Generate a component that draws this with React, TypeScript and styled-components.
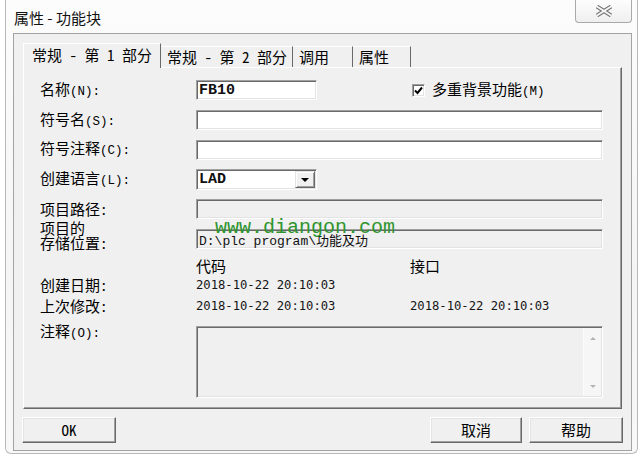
import styled, { createGlobalStyle } from 'styled-components';

const MONO_CJK = `"Noto Sans Mono CJK SC", "Noto Sans CJK SC", "DejaVu Sans Mono", monospace`;
const INPUT_FONT = `"Liberation Mono", "Noto Sans CJK SC", monospace`;

const GlobalStyle = createGlobalStyle`
  html, body {
    margin: 0;
    padding: 0;
    background: #ffffff;
  }
  body {
    width: 640px;
    height: 455px;
    overflow: hidden;
    font-family: ${MONO_CJK};
    color: #000;
  }
`;

const tabs = [
  { label: '常规 - 第 1 部分', width: 138, active: true },
  { label: '常规 - 第 2 部分', width: 132 },
  { label: '调用', width: 60 },
  { label: '属性', width: 58 },
];

const App = () => {
  return (
    <>
      <GlobalStyle />
      <Window>
        <TitleBar>
          <Title>属性 - 功能块</Title>
          <CloseButton aria-label="关闭">
            <svg width="18" height="12" viewBox="0 0 18 12">
              <path d="M2 1.5 L16 10.5 M16 1.5 L2 10.5" stroke="#707070" strokeWidth="4" />
              <path d="M2 1.5 L16 10.5 M16 1.5 L2 10.5" stroke="#f8f8f8" strokeWidth="2" />
            </svg>
          </CloseButton>
        </TitleBar>

        <Client>
          <TabStrip>
            {tabs.map((t) => (
              <Tab key={t.label} $active={t.active} $w={t.width}>
                {t.label}
              </Tab>
            ))}
          </TabStrip>

          <Panel>
            <FormGrid>
              <Label>名称<Key>(N):</Key></Label>
              <Field $w={121}>
                <FieldText $bold>FB10</FieldText>
              </Field>
              <CheckCell>
                <CheckBox>
                  <svg width="9" height="9" viewBox="0 0 9 9">
                    <polyline points="1,4.5 3.5,7 8,1.5" fill="none" stroke="#000" strokeWidth="2" />
                  </svg>
                </CheckBox>
                <span>多重背景功能<Key>(M)</Key></span>
              </CheckCell>

              <Label>符号名<Key>(S):</Key></Label>
              <Field $span />

              <Label>符号注释<Key>(C):</Key></Label>
              <Field $span />

              <Label>创建语言<Key>(L):</Key></Label>
              <Field $w={121} $h={21}>
                <FieldText $bold>LAD</FieldText>
                <DropButton>
                  <DownTriangle />
                </DropButton>
              </Field>

              <Label>项目路径:</Label>
              <Field $span $disabled />

              <StackLabel>
                项目的
                <br />
                存储位置:
              </StackLabel>
              <Field $span $disabled>
                <FieldText>D:\plc program\功能及功</FieldText>
              </Field>
            </FormGrid>

            <InfoGrid>
              <Heading $col={2}>代码</Heading>
              <Heading $col={3}>接口</Heading>

              <Label>创建日期:</Label>
              <DateText $col={2}>2018-10-22 20:10:03</DateText>

              <Label>上次修改:</Label>
              <DateText $col={2}>2018-10-22 20:10:03</DateText>
              <DateText $col={3}>2018-10-22 20:10:03</DateText>

              <TopLabel>注释<Key>(O):</Key></TopLabel>
              <TextBox>
                <Scrollbar>
                  <Arrow $dir="up" />
                  <Arrow $dir="down" />
                </Scrollbar>
              </TextBox>
            </InfoGrid>

            <Watermark>www.diangon.com</Watermark>
          </Panel>

          <Footer>
            <Button $w={94}>OK</Button>
            <ButtonGroup>
              <Button $w={92}>取消</Button>
              <Button $w={94}>帮助</Button>
            </ButtonGroup>
          </Footer>
        </Client>
      </Window>
    </>
  );
};

export default App;

const Window = styled.div`
  margin-left: 5px;
  width: 633px;
  height: 454px;
  box-sizing: border-box;
  border: 1px solid #b9b9b9;
  border-top: none;
  border-radius: 0 0 6px 6px;
  background: linear-gradient(180deg, #fcfcfc 0%, #f5f5f5 60%, #f8f8f8 100%);
  display: flex;
  flex-direction: column;
`;

const TitleBar = styled.div`
  height: 33px;
  display: flex;
  align-items: flex-start;
  padding: 0 5px 0 8px;
`;

const Title = styled.div`
  margin-top: 9px;
  font-family: "Noto Sans CJK SC", sans-serif;
  font-size: 15px;
  line-height: 17px;
  color: #111;
`;

const CloseButton = styled.div`
  margin-left: auto;
  width: 57px;
  height: 23px;
  box-sizing: border-box;
  border: 1px solid #a9a9a9;
  border-top: none;
  border-radius: 0 0 4px 4px;
  background: linear-gradient(180deg, #fdfdfd 0%, #efefef 100%);
  display: flex;
  align-items: center;
  justify-content: center;
`;

const Client = styled.div`
  margin: 0 5px 0 7px;
  height: 418px;
  box-sizing: border-box;
  border: 1px solid #a3a3a3;
  background: #f0f0f0;
  padding: 9px 9px 0 9px;
  display: flex;
  flex-direction: column;
`;

const TabStrip = styled.div`
  position: relative;
  z-index: 1;
  height: 25px;
  margin-bottom: -1px;
  display: flex;
  align-items: flex-end;
`;

const Tab = styled.div<{ $active?: boolean; $w: number }>`
  box-sizing: border-box;
  width: ${({ $w }) => $w}px;
  height: ${({ $active }) => ($active ? 25 : 21)}px;
  margin-bottom: ${({ $active }) => ($active ? 0 : 1)}px;
  padding-left: ${({ $active }) => ($active ? 8 : 5)}px;
  border-top: 1px solid #ffffff;
  border-left: 1px solid ${({ $active }) => ($active ? '#ffffff' : 'transparent')};
  border-right: 1px solid #696969;
  background: #f0f0f0;
  font-size: 15px;
  line-height: ${({ $active }) => ($active ? 22 : 19)}px;
  white-space: pre;
`;

const Panel = styled.div`
  position: relative;
  height: 342px;
  box-sizing: border-box;
  border-top: 1px solid #ffffff;
  border-left: 1px solid #ffffff;
  border-right: 1px solid #696969;
  border-bottom: 1px solid #696969;
  box-shadow: inset -1px -1px 0 #a0a0a0;
  padding: 12px 18px 0 16px;
`;

const FormGrid = styled.div`
  display: grid;
  grid-template-columns: 156px 214px 1fr;
  grid-template-rows: 20px 20px 19px 20px 20px 20px;
  row-gap: 10px;
  align-items: center;
`;

const InfoGrid = styled.div`
  display: grid;
  grid-template-columns: 156px 214px 1fr;
  grid-template-rows: 18px 20px 22px auto;
  margin-top: 8px;
  align-items: center;
`;

const Label = styled.div`
  grid-column: 1;
  font-size: 15px;
  line-height: 20px;
  white-space: nowrap;
`;

const StackLabel = styled(Label)`
  align-self: end;
  line-height: 15px;
  margin-bottom: -1px;
`;

const TopLabel = styled(Label)`
  align-self: start;
  padding-top: 5px;
  line-height: 18px;
`;

const Key = styled.span`
  font-family: "Liberation Mono", monospace;
  font-size: 12.5px;
`;

const Field = styled.div<{ $w?: number; $h?: number; $span?: boolean; $disabled?: boolean }>`
  grid-column: ${({ $span }) => ($span ? '2 / 4' : '2')};
  align-self: start;
  width: ${({ $w }) => ($w ? `${$w}px` : 'auto')};
  height: ${({ $h }) => $h ?? 20}px;
  box-sizing: border-box;
  border: 1px solid;
  border-color: #a0a0a0 #ffffff #ffffff #a0a0a0;
  box-shadow: inset 1px 1px 0 #696969, inset -1px -1px 0 #e3e3e3;
  background: ${({ $disabled }) => ($disabled ? '#f0f0f0' : '#ffffff')};
  padding-left: 1px;
  display: flex;
  align-items: center;
`;

const FieldText = styled.span<{ $bold?: boolean }>`
  padding-left: 1px;
  font-family: ${INPUT_FONT};
  font-size: ${({ $bold }) => ($bold ? 15 : 13)}px;
  font-weight: ${({ $bold }) => ($bold ? 700 : 400)};
  color: #111;
  white-space: pre;
`;

const DropButton = styled.div`
  margin-left: auto;
  margin-right: 1px;
  width: 20px;
  height: 17px;
  box-sizing: border-box;
  border: 1px solid;
  border-color: #e3e3e3 #696969 #696969 #e3e3e3;
  box-shadow: inset 1px 1px 0 #ffffff, inset -1px -1px 0 #a0a0a0;
  background: #f0f0f0;
  display: flex;
  align-items: center;
  justify-content: center;
`;

const DownTriangle = styled.span`
  width: 0;
  height: 0;
  border-left: 4px solid transparent;
  border-right: 4px solid transparent;
  border-top: 4px solid #000;
`;

const CheckCell = styled.div`
  grid-column: 3;
  display: flex;
  align-items: center;
  gap: 7px;
  padding-left: 2px;
  font-size: 15px;
  line-height: 20px;
`;

const CheckBox = styled.span`
  width: 13px;
  height: 13px;
  box-sizing: border-box;
  border: 1px solid;
  border-color: #a0a0a0 #ffffff #ffffff #a0a0a0;
  box-shadow: inset 1px 1px 0 #696969, inset -1px -1px 0 #e3e3e3;
  background: #ffffff;
  display: flex;
  align-items: center;
  justify-content: center;
`;

const Heading = styled.div<{ $col: number }>`
  grid-column: ${({ $col }) => $col};
  font-size: 15px;
  line-height: 18px;
`;

const DateText = styled.div<{ $col: number }>`
  grid-column: ${({ $col }) => $col};
  font-family: "DejaVu Sans Mono", monospace;
  font-size: 12.2px;
  color: #151515;
  white-space: nowrap;
`;

const TextBox = styled.div`
  grid-column: 2 / 4;
  align-self: start;
  margin-top: 9px;
  height: 72px;
  box-sizing: border-box;
  border: 1px solid;
  border-color: #a0a0a0 #ffffff #ffffff #a0a0a0;
  box-shadow: inset 1px 1px 0 #696969, inset -1px -1px 0 #e3e3e3;
  background: #f0f0f0;
  display: flex;
  justify-content: flex-end;
  padding: 1px 1px 1px 0;
`;

const Scrollbar = styled.div`
  width: 18px;
  box-sizing: border-box;
  background: #f6f6f6;
  border-left: 1px solid #fbfbfb;
  display: flex;
  flex-direction: column;
  align-items: center;
  justify-content: space-between;
  padding: 9px 0 8px;
`;

const Arrow = styled.span<{ $dir: 'up' | 'down' }>`
  width: 0;
  height: 0;
  border-left: 3px solid transparent;
  border-right: 3px solid transparent;
  ${({ $dir }) =>
    $dir === 'up' ? 'border-bottom: 3px solid #b4b4b4;' : 'border-top: 3px solid #b4b4b4;'}
`;

const Watermark = styled.div`
  position: absolute;
  left: 191px;
  top: 150px;
  font-family: "Liberation Mono", monospace;
  font-size: 20px;
  line-height: 20px;
  color: #2f952f;
  pointer-events: none;
  white-space: nowrap;
`;

const Footer = styled.div`
  display: flex;
  justify-content: space-between;
  margin: 8px -1px 0 -1px;
`;

const ButtonGroup = styled.div`
  display: flex;
  gap: 7px;
`;

const Button = styled.div<{ $w: number }>`
  width: ${({ $w }) => $w}px;
  height: 26px;
  box-sizing: border-box;
  border: 1px solid;
  border-color: #ffffff #696969 #696969 #ffffff;
  box-shadow: inset -1px -1px 0 #a0a0a0, inset 1px 1px 0 #e3e3e3;
  background: #f0f0f0;
  font-size: 15px;
  line-height: 24px;
  text-align: center;
`;
